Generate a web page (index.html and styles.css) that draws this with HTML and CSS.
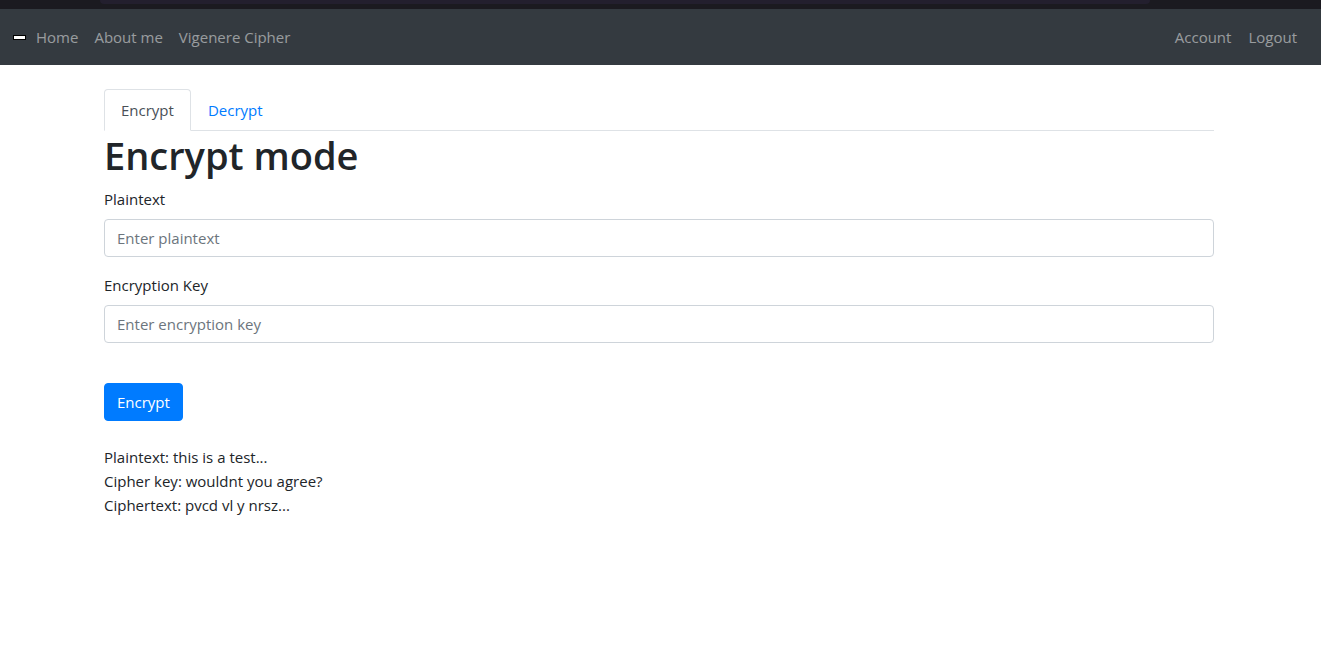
FILE: index.html
```html
<!DOCTYPE html>
<html>
<head>
<meta charset="utf-8">
<link rel="stylesheet" href="styles.css">
</head>
<body>
<div class="topstrip"><div class="topstrip-inner"></div></div>
<nav class="navbar">
  <div class="nav-left">
    <span class="brand"><span class="brand-bar"></span></span>
    <a class="nav-link">Home</a>
    <a class="nav-link">About me</a>
    <a class="nav-link">Vigenere Cipher</a>
  </div>
  <div class="nav-right">
    <a class="nav-link">Account</a>
    <a class="nav-link">Logout</a>
  </div>
</nav>
<main class="container">
  <div class="tabs">
    <a class="tab active">Encrypt</a>
    <a class="tab">Decrypt</a>
  </div>
  <h1 class="title">Encrypt mode</h1>
  <div class="form-group">
    <label class="label">Plaintext</label>
    <input class="input" type="text" placeholder="Enter plaintext">
  </div>
  <div class="form-group">
    <label class="label">Encryption Key</label>
    <input class="input" type="text" placeholder="Enter encryption key">
  </div>
  <button class="btn">Encrypt</button>
  <div class="result">
    <div>Plaintext: this is a test...</div>
    <div>Cipher key: wouldnt you agree?</div>
    <div>Ciphertext: pvcd vl y nrsz...</div>
  </div>
</main>
</body>
</html>
```

FILE: styles.css
```css
* { box-sizing: border-box; }
body {
  margin: 0;
  font-family: "Open Sans", "Noto Sans", sans-serif;
  font-size: 15px;
  line-height: 24px;
  color: #212529;
  background: #fff;
}
.topstrip {
  height: 9px;
  background: #1b1a20;
  padding: 0 171px 0 100px;
}
.topstrip-inner {
  height: 4px;
  background: #231f2e;
  border-radius: 0 0 4px 4px;
}
.navbar {
  height: 56px;
  background: #343a40;
  display: flex;
  align-items: center;
  justify-content: space-between;
  padding: 0 16px 0 13px;
}
.nav-left, .nav-right { display: flex; align-items: center; }
.nav-right { gap: 1px; }
.brand {
  width: 15px;
  display: flex;
  align-items: center;
}
.brand-bar {
  display: block;
  width: 13px;
  height: 5px;
  background: #fff;
  border: 1px solid #000;
}
.nav-link {
  color: rgba(255,255,255,.5);
  padding: 8px;
  cursor: pointer;
}
.container {
  width: 1110px;
  margin: 24px 0 0 104px;
}
.tabs {
  display: flex;
  border-bottom: 1px solid #dee2e6;
  height: 42px;
}
.tab {
  padding: 8px 16px;
  border: 1px solid transparent;
  border-top-left-radius: 4px;
  border-top-right-radius: 4px;
  color: #007bff;
  margin-bottom: -1px;
  height: 42px;
}
.tab.active {
  color: #495057;
  background: #fff;
  border-color: #dee2e6 #dee2e6 #fff;
}
.title {
  margin: 0 0 8px;
  font-size: 38px;
  font-weight: 600;
  line-height: 48px;
}
.form-group { margin-bottom: 16px; }
.label {
  display: block;
  margin-bottom: 8px;
}
.input {
  display: block;
  width: 100%;
  height: 38px;
  padding: 6px 12px;
  font: inherit;
  color: #495057;
  border: 1px solid #ced4da;
  border-radius: 4px;
  outline: none;
}
.input::placeholder { color: #6c757d; }
.btn {
  display: block;
  margin-top: 40px;
  height: 38px;
  padding: 6px 12px;
  font: inherit;
  color: #fff;
  background: #007bff;
  border: 1px solid #007bff;
  border-radius: 4px;
}
.result { margin-top: 24px; }
```
